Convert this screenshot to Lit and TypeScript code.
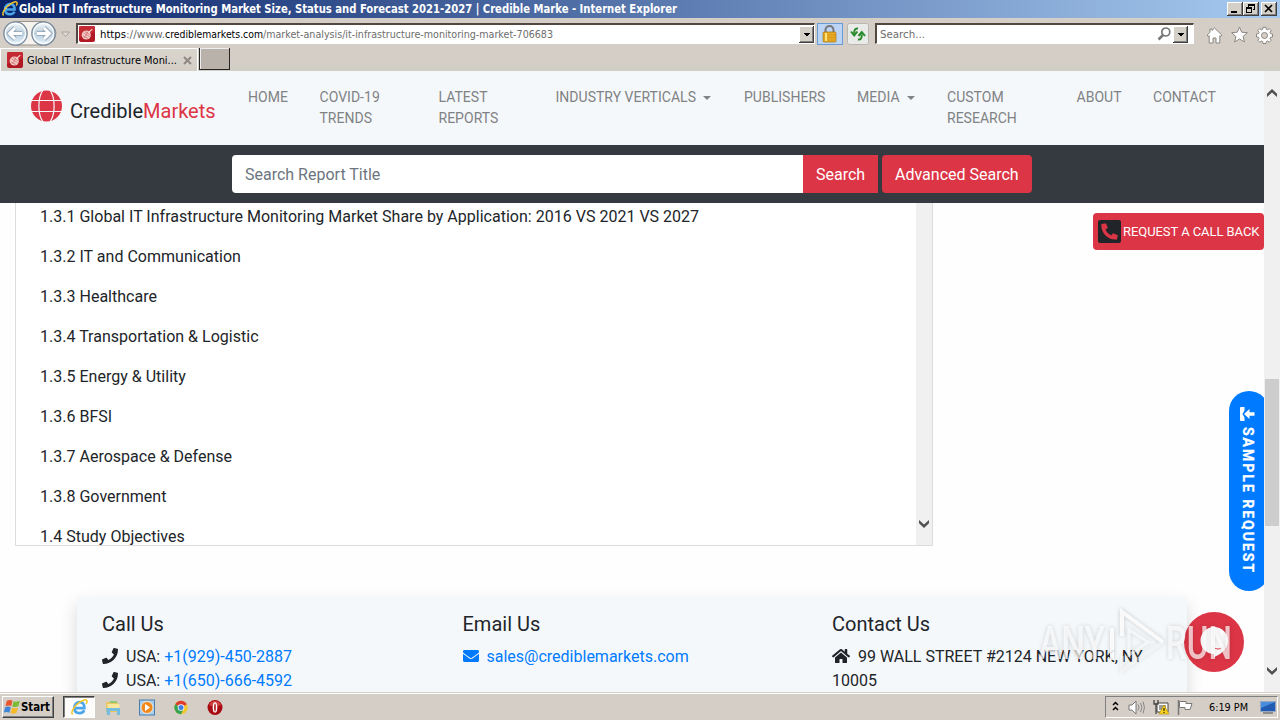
import { LitElement, html, svg, css } from "lit";
import { customElement } from "lit/decorators.js";

// A single line of interface text set to an exact advance width.
const line = (text: string, width: number, cls = "") => html`<svg class="line ${cls}" width=${width} height="16" viewBox="0 0 ${width} 16"><text x="0" y="12" textLength=${width} lengthAdjust="spacingAndGlyphs">${text}</text></svg>`;

const phonePath = "M493.4 24.6l-104-24c-11.3-2.6-22.9 3.3-27.5 13.9l-48 112c-4.2 9.8-1.4 21.3 6.9 28l60.6 49.6c-36 76.7-98.9 140.5-177.2 177.2l-49.6-60.6c-6.8-8.3-18.2-11.1-28-6.9l-112 48C3.9 366.5-2 378.1.6 389.4l24 104C27.1 504.2 36.7 512 48 512c256.1 0 464-207.5 464-464 0-11.2-7.7-20.9-18.6-23.4z";
const phoneAltPath = "M497.39 361.8l-112-48a24 24 0 0 0-28 6.9l-49.6 60.6A370.66 370.66 0 0 1 130.6 204.11l60.6-49.6a23.94 23.94 0 0 0 6.9-28l-48-112A24.16 24.16 0 0 0 122.6.61l-104 24A24 24 0 0 0 0 48c0 256.5 207.9 464 464 464a24 24 0 0 0 23.4-18.6l24-104a24.29 24.29 0 0 0-14.01-27.6z";
const mailPath = "M502.3 190.8c3.9-3.1 9.7-.2 9.7 4.7V400c0 26.5-21.5 48-48 48H48c-26.5 0-48-21.5-48-48V195.6c0-5 5.7-7.8 9.7-4.7 22.4 17.4 52.1 39.5 154.1 113.6 21.1 15.4 56.7 47.8 92.2 47.6 35.7.3 72-32.8 92.3-47.6 102-74.1 131.6-96.3 154-113.7zM256 320c23.2.4 56.6-29.2 73.4-41.4 132.7-96.3 142.8-104.7 173.4-128.7 5.8-4.5 9.2-11.5 9.2-18.9v-19c0-26.5-21.5-48-48-48H48c-26.5 0-48 21.5-48 48v19c0 7.4 3.4 14.3 9.2 18.9 30.6 23.9 40.7 32.4 173.4 128.7 16.8 12.2 50.2 41.8 73.4 41.4z";
const homePath = "M280.37 148.26L96 300.11V464a16 16 0 0 0 16 16l112.06-.29a16 16 0 0 0 15.92-16V368a16 16 0 0 1 16-16h64a16 16 0 0 1 16 16v95.64a16 16 0 0 0 16 16.05L464 480a16 16 0 0 0 16-16V300L295.67 148.26a12.19 12.19 0 0 0-15.3 0zM571.6 251.47L488 182.56V44.05a12 12 0 0 0-12-12h-56a12 12 0 0 0-12 12v72.61L318.47 43a48 48 0 0 0-61 0L4.34 251.47a12 12 0 0 0-1.6 16.9l25.5 31A12 12 0 0 0 45.15 301l235.22-193.74a12.19 12.19 0 0 1 15.3 0L530.9 301a12 12 0 0 0 16.9-1.6l25.5-31a12 12 0 0 0-1.7-16.93z";

const ieMark = svg`
  <path d="M3.4 8.6H12.6C12.8 4.9 10.9 2.9 8.1 2.9S3.1 5 3.1 8.2s2 5.1 5 5.1c2.100 0 3.600-.9 4.300-2.700" fill="none" stroke="#4aa5ea" stroke-width="2.500"/>
  <path d="M4.200 7.800c.4-1.800 1.900-3.200 4-3.300" fill="none" stroke="#c4ebff" stroke-width=".9"/>
  <path d="M1.600 14.500C-.8 12.700 3.200 6.500 7.500 3.500 11 .9 14.900-.3 15.100 1.900c.1.900-.3 1.900-.8 2.700" fill="none" stroke="#f3c52c" stroke-width="1.500"/>`;

const favicon = html`<svg class="fav" width="16" height="16" viewBox="0 0 16 16">
  <rect width="16" height="16" rx="2" fill="#b01824"/><path d="M0 0h16v6L0 12z" fill="#d2343c" opacity=".6"/>
  <circle cx="7.300" cy="9" r="4.600" fill="#f3c9c4"/><path d="M4.500 7l6 3.500M4 10l5 2.500M6 5.500l5.500 3.500M9 5.500L5.500 12" stroke="#c85a60" stroke-width=".6"/>
  <path d="M9.500 6.500L13.300 3.200" stroke="#f6dcd8" stroke-width="1.100"/></svg>`;

const dropButton = html`<svg class="drop" width="15" height="17" viewBox="0 0 15 17" shape-rendering="crispEdges">
  <rect width="15" height="17" fill="#404040"/><rect width="14" height="16" fill="#fff"/><rect x="1" y="1" width="13" height="15" fill="#808080"/><rect x="1" y="1" width="12" height="14" fill="#d4d0c8"/><path d="M4 7h7L7.500 10.500z" fill="#000"/></svg>`;

const chevron = (down: boolean) => html`<svg class="chev" width="16" height="16" viewBox="0 0 16 16"><path d=${down ? "M3 4l5 4.600 5-4.600v3.200l-5 4.800-5-4.800z" : "M3 12l5-4.600 5 4.600V8.800L8 4 3 8.800z"} fill="#505050"/></svg>`;

@customElement("browser-chrome")
export class BrowserChrome extends LitElement {
  static styles = css`
    :host { display: block; font-family: "DejaVu Sans Condensed", "DejaVu Sans", sans-serif; }
    svg { display: block; flex: none; }
    .line { overflow: visible; }
    .line text { font: 11px "DejaVu Sans Condensed", "DejaVu Sans", sans-serif; fill: #000; }
    .line.title text { font-weight: bold; font-size: 11.500px; fill: #fff; }
    .line.grey text { fill: #6d6d6d; }
    .titlebar { height: 18px; display: flex; align-items: center; padding: 0 3px 0 2px; background: linear-gradient(90deg, #0a246a, #a6caf0); }
    .titlebar .line { margin: 0 0 0 1px; }
    .controls { margin-left: auto; display: flex; }
    .bar { height: 30px; box-sizing: border-box; border-top: 1px solid #d4d0c8; display: flex; align-items: center; background: #d5cec7; }
    .field { height: 21px; box-sizing: border-box; border: 1px solid #fff; border-top: 2px solid #514941; border-left: 2px solid #514941; background: #fff; display: flex; align-items: center; }
    .address { width: 739px; margin-left: 4px; }
    .fav { margin: 0 5px 0 1px; }
    .drop { margin-left: auto; }
    .lock { margin-left: 2px; }
    .reload { margin-left: 4px; }
    .find { width: 319px; margin-left: 6px; padding-left: 3px; }
    .find .glass { margin-left: auto; }
    .find .drop { margin: 0 5px 0 1px; }
    .tools { display: flex; gap: 8px; margin: 2px 0 0 12px; }
    .tabs { height: 23px; display: flex; background: linear-gradient(#d5cec7 15px, #d0cec5 19px); }
    .tab { width: 198px; height: 23px; box-sizing: border-box; border-top: 1px solid #fff; border-left: 1px solid #fff; border-right: 1px solid #fff; display: flex; align-items: center; padding-left: 6px; background: linear-gradient(#d9d4cc, #d3cfc7); }
    .tab .fav { margin: 0 4px 0 0; }
    .tab .x { margin-left: 6px; }
    .newtab { width: 31px; height: 22px; box-sizing: border-box; background: #b9b2aa; border: 1px solid #252525; border-width: 0 1px 1px 1px; box-shadow: inset 1px 1px #eee; margin-left: 1px; }
  `;
  render() {
    return html`
      <div class="titlebar">
        <svg width="16" height="16" viewBox="0 0 16 16">${ieMark}</svg>
        ${line("Global IT Infrastructure Monitoring Market Size, Status and Forecast 2021-2027 | Credible Marke - Internet Explorer", 658, "title")}
        <svg class="controls" width="50" height="14" viewBox="0 0 50 14" shape-rendering="crispEdges">
          ${[0, 16, 34].map((x) => svg`<rect x=${x} width="16" height="14" fill="#404040"/><rect x=${x} width="15" height="13" fill="#fff"/><rect x=${x + 1} y="1" width="14" height="12" fill="#808080"/><rect x=${x + 1} y="1" width="13" height="11" fill="#d4d0c8"/>`)}
          <path d="M4 9h6v2H4zM21 2h7v6h-2V5h-5z" fill="#000"/><path d="M22 4h5v3h-5z" fill="#d4d0c8"/><path d="M19 5h6v6h-6z" fill="#000"/><path d="M20 7h4v3h-4z" fill="#d4d0c8"/>
          <path d="M38 3l7 7M45 3l-7 7" stroke="#000" stroke-width="1.700" shape-rendering="auto"/>
        </svg>
      </div>
      <div class="bar">
        <svg width="72" height="29" viewBox="0 0 72 29">
          <defs><linearGradient id="orb" x2="0" y2="1"><stop stop-color="#f4f8fb"/><stop offset=".5" stop-color="#bacfdd"/><stop offset="1" stop-color="#e9f5fd"/></linearGradient></defs>
          <path d="M14 2.500H44Q55 5 56 14 55 25 44 26H14z" fill="#f6f3ef" stroke="#9c958d"/>
          ${[15.5, 43.5].map((x) => svg`<circle cx=${x} cy="14.500" r="11.700" fill="url(#orb)" stroke="#78899a" stroke-width="1.200"/><circle cx=${x} cy="14.500" r="10" fill="none" stroke="#fff" stroke-width="1.200"/>`)}
          <path d="M22 14.500H10M15 9l-5.500 5.500L15 20" fill="none" stroke="#8ba0b4" stroke-width="4.600"/><path d="M22 14.500H10M15 9l-5.500 5.500L15 20" fill="none" stroke="#fff" stroke-width="3"/>
          <path d="M37 14.500h12M44 9l5.500 5.500L44 20" fill="none" stroke="#8ba0b4" stroke-width="4.600"/><path d="M37 14.500h12M44 9l5.500 5.500L44 20" fill="none" stroke="#fff" stroke-width="3"/>
          <path d="M61.500 13h8l-4 4.500z" fill="#e0dbd5" stroke="#aaa39d"/>
        </svg>
        <div class="field address">
          ${favicon}${line("https", 26)}${line("://www.", 39, "grey")}${line("crediblemarkets.com", 98)}${line("/market-analysis/it-infrastructure-monitoring-market-706683", 290, "grey")}${dropButton}
        </div>
        <svg class="lock" width="26" height="22" viewBox="0 0 26 22"><rect x=".5" y=".5" width="25" height="21" fill="#bcd5f5" stroke="#699bd5"/><path d="M8.500 10V7a4 4 0 0 1 8 0v3" fill="none" stroke="#777" stroke-width="2"/><rect x="6" y="9" width="13" height="10" rx="1" fill="#e8ab22" stroke="#a87413" stroke-width=".7"/><path d="M7 12h11M7 14.500h11M7 17h11" stroke="#cf9420" stroke-width=".8"/><path d="M9 10v8" stroke="#ffe279" stroke-width="2"/></svg>
        <svg class="reload" width="22" height="22" viewBox="0 0 22 22"><rect x=".5" y=".5" width="21" height="21" rx="2" fill="#e8ebe8" stroke="#bbb7b0"/><path d="M11 5.500C8 5 7.200 7 7.200 10.500M4 8.500l3.200 4 3.200-4M11 16.500c3 .5 3.800-1.500 3.800-5M11.500 13l3.300-4 3.200 4" fill="none" stroke="#278a28" stroke-width="2"/></svg>
        <div class="field find">${line("Search...", 45, "grey")}
          <svg class="glass" width="15" height="16" viewBox="0 0 15 16"><circle cx="8.800" cy="6" r="4" fill="#fff" stroke="#777" stroke-width="1.700"/><path d="M6 9l-4.500 4.500" stroke="#777" stroke-width="2.500"/></svg>${dropButton}</div>
        <div class="tools">
          <svg width="17" height="18" viewBox="0 0 17 18"><path d="M8.500 2l7.300 7-1 1.500-1-.8V17H10v-5H7v5H3.200V9.700l-1 .8-1-1.500L4 6.300V3h2v1.400z" fill="#fff" stroke="#8b8680"/></svg>
          <svg width="17" height="18" viewBox="0 0 17 18"><path d="M8.500 1l2.200 5.200 5.600.5-4.200 3.700 1.300 5.500-4.900-2.900L3.600 16l1.300-5.500L.7 6.700l5.600-.5z" fill="#fff" stroke="#8b8680"/></svg>
          <svg width="17" height="18" viewBox="0 0 17 18"><path d="M7 1.300h3l.3 2 1.200.5 1.700-1.200 2 2L14 6.400l.5 1.200 2 .4v3l-2 .3-.5 1.200 1.200 1.700-2 2-1.700-1.200-1.200.5-.3 2H7l-.3-2-1.200-.5-1.700 1.200-2-2L3 12.500l-.5-1.200-2-.3V8l2-.4L3 6.400 1.800 4.600l2-2 1.700 1.200 1.200-.5z" fill="#fff" stroke="#8b8680"/><circle cx="8.500" cy="9.500" r="3" fill="#d5cec7" stroke="#8b8680"/></svg>
        </div>
      </div>
      <div class="tabs">
        <div class="tab">${favicon}${line("Global IT Infrastructure Moni...", 150)}
          <svg class="x" width="9" height="9" viewBox="0 0 9 9"><path d="M1 1l7 7M8 1L1 8" stroke="#8d8782" stroke-width="2"/></svg></div>
        <div class="newtab"></div>
      </div>`;
  }
}

@customElement("task-bar")
export class TaskBar extends LitElement {
  static styles = css`
    :host { display: flex; align-items: center; height: 28px; box-sizing: border-box; padding: 3px 2px 1px; background: linear-gradient(#d4d0c8 1px, #fff 1px, #fff 2px, #d5cec6 2px); }
    svg { display: block; flex: none; }
    .line { overflow: visible; }
    .line text { font: 11px "DejaVu Sans Condensed", "DejaVu Sans", sans-serif; fill: #000; }
    .line.start text { font-weight: bold; font-size: 11.500px; }
    .startbtn { width: 52px; height: 22px; box-sizing: border-box; border: 1px solid #fff; border-right-color: #404040; border-bottom-color: #404040; box-shadow: inset -1px -1px #808080; display: flex; align-items: center; padding-left: 1px; }
    .active { width: 32px; height: 22px; box-sizing: border-box; margin-left: 9px; border: 1px solid #fff; border-top-color: #404040; border-left-color: #404040; box-shadow: inset 1px 1px #808080; background: #fdfcfb; display: grid; place-items: center; }
    .apps { display: flex; gap: 18px; margin-left: 10px; }
    .tray { margin-left: auto; width: 173px; height: 22px; box-sizing: border-box; border: 1px solid #fff; border-top-color: #808080; border-left-color: #808080; display: flex; align-items: center; padding-left: 5px; }
    .clock { margin-left: 14px; }
    .desk { margin-left: 12px; }
  `;
  render() {
    return html`
      <div class="startbtn">
        <svg width="17" height="16" viewBox="1 1 15 14"><path d="M3.500 2.500Q6 1 8.500 2.500L7.400 7.200Q5 6 2.300 7.200z" fill="#e8562d"/><path d="M9.500 3Q12 4 15 2.500L13.700 7.300Q11 8.500 8.300 7.500z" fill="#7cbb35"/><path d="M2 8.300Q4.500 7 7 8.300L5.800 13Q3.500 11.800.8 13z" fill="#3f86d8"/><path d="M8 8.700Q11 9.800 13.400 8.400L12 13.300Q9.500 14.600 6.800 13.400z" fill="#f5b827"/></svg>
        ${line("Start", 29, "start")}
      </div>
      <div class="active"><svg width="17" height="17" viewBox="0 0 16 16">${ieMark}</svg></div>
      <div class="apps">
        <svg width="16" height="17" viewBox="0 0 16 17"><path d="M1 3h5l1 1h6v9H1z" fill="#e6c761"/><path d="M2.500 5h12v7h-12z" fill="#f8e79c"/><path d="M1 9h14v7h-3v-4H5v4H2z" fill="#76bde0"/><path d="M5 2h7v2H5z" fill="#91c979"/></svg>
        <svg width="16" height="17" viewBox="0 0 16 17"><rect x=".5" y="1" width="15" height="15" fill="#a7cdea" stroke="#497fae"/><circle cx="8" cy="8.500" r="6" fill="#f08a1d" stroke="#fff" stroke-width=".7"/><path d="M6 5l5 3.500L6 12z" fill="#fff"/></svg>
        <svg width="16" height="17" viewBox="0 0 16 17"><circle cx="8" cy="8.500" r="6.700" fill="#f3c82c"/><path d="M8 8.500L2.200 5.200A6.700 6.700 0 0 1 13.800 5.200z" fill="#df3c31"/><path d="M2.200 5.200A6.700 6.700 0 0 0 8 15.200l2.500-5z" fill="#37a352"/><circle cx="8" cy="8.500" r="3.300" fill="#fff"/><circle cx="8" cy="8.500" r="2.500" fill="#3f7fe0"/></svg>
        <svg width="16" height="17" viewBox="0 0 16 17"><circle cx="8" cy="8.500" r="7.500" fill="#a80c12"/><path d="M2 6a6.500 6.500 0 0 1 12 0q-6 3-12 0" fill="#dd5550" opacity=".7"/><ellipse cx="8" cy="8.500" rx="2.300" ry="5.200" fill="#fff"/><ellipse cx="8" cy="8.500" rx=".8" ry="4" fill="#a80c12"/></svg>
      </div>
      <div class="tray">
        <svg width="84" height="18" viewBox="0 0 84 18">
          <path d="M2 7l2.500-2.500L7 7M2 12l2.500-2.500L7 12" fill="none" stroke="#000" stroke-width="1.500"/>
          <path d="M18 7h3l4-4v13l-4-4h-3z" fill="#fff" stroke="#777"/><path d="M27 6.500q2 3 0 6M29.500 5q3 4.500 0 9M32 3.500q3 6 0 12" fill="none" stroke="#888"/>
          <path d="M46 5h11v9H46z" fill="#fff" stroke="#444"/><path d="M43 2v4h4V2M45 6v10" stroke="#444" stroke-width="1.300" fill="none"/><path d="M48 7h7v5h-7z" fill="#9a9a9a"/><path d="M53 7l5 9H48z" fill="#f8d21e" stroke="#b28800" stroke-width=".6"/><path d="M53 10v3M53 14v1" stroke="#000"/>
          <path d="M67.500 2v15" stroke="#777" stroke-width="1.500"/><path d="M68.500 3.500H75v2h6l-2 6h-5v-2h-5.500z" fill="#fff" stroke="#777"/>
        </svg>
        <div class="clock">${line("6:19 PM", 39)}</div>
        <svg class="desk" width="17" height="16" viewBox="0 0 17 16"><rect x=".5" y="2.500" width="15" height="10" fill="#225cb2" stroke="#94a8c2"/><path d="M1 3h14L1 9z" fill="#498edb"/><path d="M3 14h10" stroke="#777" stroke-width="1.500"/></svg>
      </div>`;
  }
}

@customElement("app-root")
export class AppRoot extends LitElement {
  static styles = css`
    :host { display: grid; grid-template-rows: 71px 621px 28px; width: 1280px; height: 720px; position: relative; overflow: hidden; background: #fff; font-family: Roboto, sans-serif; font-size: 16px; line-height: 24px; color: #212529; }
    svg { display: block; flex: none; }
    .view { display: grid; grid-template-columns: 1264px 16px; min-height: 0; }
    .page { display: flex; flex-direction: column; min-height: 0; overflow: hidden; background: #fefefe; }
    .nav { height: 74px; box-sizing: border-box; background: #f5f8fb; flex: none; display: flex; align-items: flex-start; padding: 16px 0 0 31px; }
    .brand { display: flex; width: 217px; gap: 8px; font-size: 20px; line-height: 30px; white-space: nowrap; }
    .globe { margin-top: 3px; }
    .name { margin-top: 9px; }
    .name b { font-weight: 400; color: #dc3545; }
    .links { display: grid; grid-template-columns: 71.500px 119px 117px 188.500px 113px 90px 129.500px 76.500px 80px; font-size: 14px; line-height: 21px; color: #808284; letter-spacing: .02px; }
    .link { white-space: pre-line; }
    .caret::after { content: ""; display: inline-block; margin-left: 7px; vertical-align: 2.500px; border-top: 4.500px solid; border-left: 4.500px solid transparent; border-right: 4.500px solid transparent; }
    .search { height: 58px; flex: none; background: #343a40; display: flex; align-items: center; justify-content: center; }
    .input { width: 571px; height: 38px; box-sizing: border-box; padding: 8px 13px 6px; background: #fff; color: #6c757d; border-radius: 4px 0 0 4px; }
    .btn { height: 38px; box-sizing: border-box; padding: 8px 13px 6px; background: #dc3545; color: #fff; white-space: nowrap; }
    .go { width: 75px; }
    .adv { width: 150px; margin-left: 4px; border-radius: 4px; }
    .toc { width: 918px; height: 343px; flex: none; margin-left: 15px; box-sizing: border-box; border: 1px solid #dcdcdc; border-top: 0; background: #fff; display: grid; grid-template-columns: 900px 16px; overflow: hidden; }
    .rows { padding: 2px 24px 0; overflow: hidden; height: 342px; box-sizing: border-box; letter-spacing: .012px; }
    .row { height: 40px; }
    .track { background: #f0f0f0; display: flex; flex-direction: column; justify-content: flex-end; padding-bottom: 13px; }
    .contact { margin: 51px 77px 0; height: 140px; flex: none; box-sizing: border-box; padding: 15px 25px; background: #f5f8fb; box-shadow: 0 8px 16px rgba(0,0,0,.15); display: grid; grid-template-columns: 360.500px 369.500px 340px; }
    .heading { font-size: 20px; line-height: 24px; margin-bottom: 9px; }
    .entry { display: flex; align-items: center; white-space: pre; height: 24px; }
    .entry svg { margin: -2px 8px 0 0; }
    .blue { color: #007bff; }
    .scroll { background: #f0f0f0; display: flex; flex-direction: column; align-items: center; }
    .up { margin: 14px 0 278px; }
    .thumb { width: 14px; height: 147px; background: #cdcdcd; }
    .down { margin-top: 137px; }
    .callback { position: absolute; left: 1093px; top: 213px; width: 171px; height: 37px; box-sizing: border-box; border-radius: 4px; background: #dc3545; color: #fff; display: flex; align-items: center; gap: 2px; padding-left: 5px; font-size: 13px; letter-spacing: -.06px; white-space: nowrap; }
    .sample { position: absolute; left: 1229px; top: 391px; width: 35px; height: 200px; overflow: hidden; }
    .pill { width: 40px; height: 200px; box-sizing: border-box; border-radius: 20px; background: #007bff; color: #fff; display: flex; flex-direction: column; align-items: center; padding: 16px 3px 0 0; gap: 6px; }
    .pill span { writing-mode: vertical-rl; font-size: 14px; line-height: 20px; font-weight: 700; letter-spacing: 2px; white-space: nowrap; -webkit-text-stroke: .3px #fff; }
    .chat { position: absolute; left: 1184px; top: 612px; }
    .mark { position: absolute; left: 1030px; top: 600px; overflow: visible; filter: drop-shadow(0 0 2px rgba(0,0,0,.22)); }
    .mark text { font: 500 46px Roboto, sans-serif; fill: #fff; fill-opacity: .7; }
  `;
  render() {
    const rows = ["1.3.1 Global IT Infrastructure Monitoring Market Share by Application: 2016 VS 2021 VS 2027", "1.3.2 IT and Communication", "1.3.3 Healthcare", "1.3.4 Transportation & Logistic", "1.3.5 Energy & Utility", "1.3.6 BFSI", "1.3.7 Aerospace & Defense", "1.3.8 Government", "1.4 Study Objectives"];
    const links = ["HOME", "COVID-19\nTRENDS", "LATEST\nREPORTS", "INDUSTRY VERTICALS", "PUBLISHERS", "MEDIA", "CUSTOM\nRESEARCH", "ABOUT", "CONTACT"];
    const phone = html`<svg width="16" height="16" viewBox="0 0 512 512" fill="#212529"><path d=${phonePath}/></svg>`;
    return html`
      <browser-chrome></browser-chrome>
      <div class="view">
        <div class="page">
          <div class="nav">
            <div class="brand">
              <svg class="globe" width="31" height="32" viewBox="0 0 31 32"><circle cx="15.500" cy="16" r="15.500" fill="#dc3545"/><path d="M12 0C6.500 8 6.500 24 12 32M19 0C24.500 8 24.500 24 19 32M0 10.500H31M0 21.500H31" fill="none" stroke="#f5f8fb" stroke-width="1.200"/></svg>
              <div class="name">Credible<b>Markets</b></div>
            </div>
            <div class="links">${links.map((t) => html`<div class="link ${t === "MEDIA" || t.startsWith("IND") ? "caret" : ""}">${t}</div>`)}</div>
          </div>
          <div class="search"><div class="input">Search Report Title</div><div class="btn go">Search</div><div class="btn adv">Advanced Search</div></div>
          <div class="toc">
            <div class="rows">${rows.map((t) => html`<div class="row">${t}</div>`)}</div>
            <div class="track">${chevron(true)}</div>
          </div>
          <div class="contact">
            <div><div class="heading">Call Us</div>
              <div class="entry">${phone}<span>USA: <span class="blue">+1(929)-450-2887</span></span></div>
              <div class="entry">${phone}<span>USA: <span class="blue">+1(650)-666-4592</span></span></div></div>
            <div><div class="heading">Email Us</div>
              <div class="entry blue"><svg width="16" height="16" viewBox="0 0 512 512" fill="#007bff"><path d=${mailPath}/></svg>sales@crediblemarkets.com</div></div>
            <div><div class="heading">Contact Us</div>
              <div class="entry"><svg width="18" height="16" viewBox="0 0 576 512" fill="#212529"><path d=${homePath}/></svg>99 WALL STREET #2124 NEW YORK, NY</div>
              <div class="entry">10005</div></div>
          </div>
        </div>
        <div class="scroll"><div class="up">${chevron(false)}</div><div class="thumb"></div><div class="down">${chevron(true)}</div></div>
      </div>
      <task-bar></task-bar>
      <div class="callback"><svg width="23" height="23" viewBox="0 0 22 22"><rect width="22" height="22" rx="2" fill="#212529"/><svg x="3" y="3" width="16" height="16" viewBox="0 0 512 512"><path d=${phoneAltPath} fill="#dc3545"/></svg></svg>REQUEST A CALL BACK</div>
      <div class="sample"><div class="pill">
        <svg width="15" height="14" viewBox="0 0 15 14" fill="#fff"><path d="M1 0h3.500v3.500L2.500 7l2 3.500V14H1q-1 0-1-1V1q0-1 1-1z"/><path d="M14.500 5.300v3.400H9.500v3.300L4 7l5.500-5v3.300z"/></svg>
        <span>SAMPLE REQUEST</span></div></div>
      <svg class="chat" width="60" height="60" viewBox="0 0 60 60"><circle cx="30" cy="30" r="30" fill="#dc3545"/><path d="M30 15a14 14 0 0 1 14 14c0 7-6 13-14 16v-3a13.500 13.500 0 1 1 0-27z" fill="#fff"/><path d="M29 35q5 3 10 0-5 5-10 0z" fill="#dc3545"/></svg>
      <svg class="mark" width="215" height="80" viewBox="0 0 215 80">
        <text x="9" y="59" textLength="66" lengthAdjust="spacingAndGlyphs">ANY</text>
        <text x="136" y="59" textLength="66" lengthAdjust="spacingAndGlyphs">RUN</text>
        <path d="M82 60V28M92 36V12L133 42" fill="none" stroke="#fff" stroke-opacity=".85" stroke-width="4"/><path d="M133 42L92 70V56" fill="none" stroke="#fff" stroke-opacity=".4" stroke-width="4"/><path d="M99 30v25l19-13z" fill="none" stroke="#fff" stroke-opacity=".6" stroke-width="3"/>
      </svg>`;
  }
}
